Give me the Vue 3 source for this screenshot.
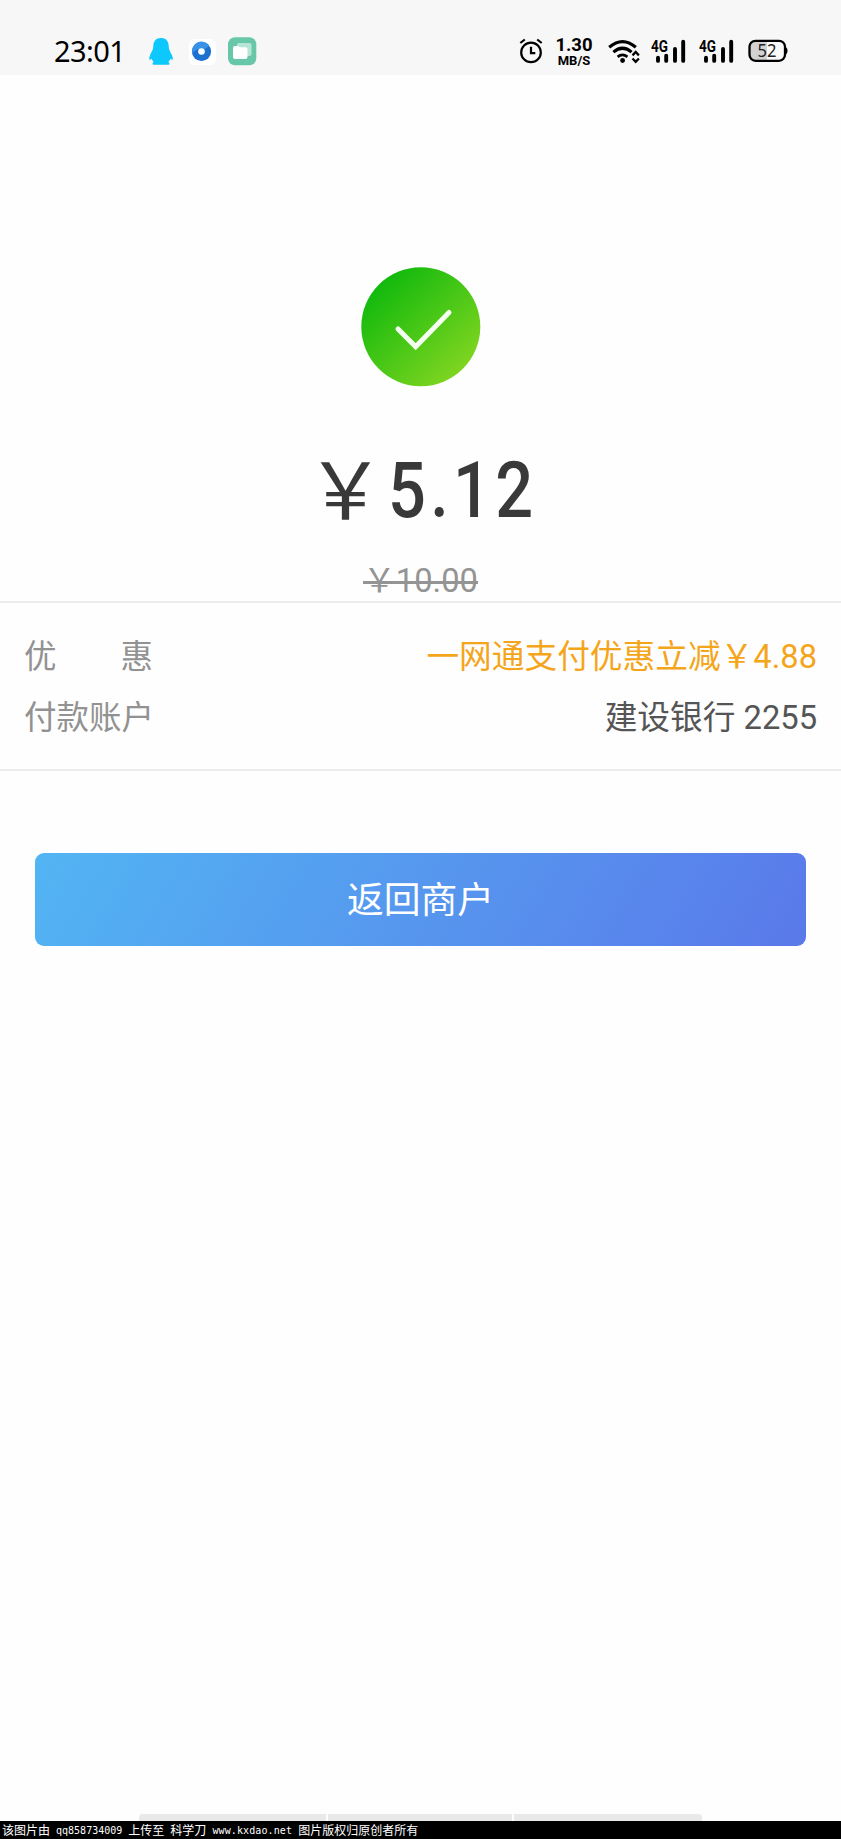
<script setup>
const amount = '5.12'
const rows = [
  { label: ['优', '惠'], cjk: '一网通支付优惠立减￥', num: '4.88', tone: 'promo' },
  { label: ['付', '款', '账', '户'], cjk: '建设银行', num: ' 2255', tone: 'plain' }
]
const mark = [
  { t: '该图片由', c: 'han' }, { t: ' qq858734009 ', c: 'lat' },
  { t: '上传至', c: 'han' }, { t: ' ', c: 'lat' },
  { t: '科学刀', c: 'han' }, { t: ' www.kxdao.net ', c: 'lat site' },
  { t: '图片版权归原创者所有', c: 'han' }
]
</script>

<template>
  <div class="page">
    <header class="status">
      <span class="clock">23:01</span>
      <svg class="apps" width="110" height="30" viewBox="0 0 110 30">
        <path fill="#0cc8fc" d="M12 1C6.800 1 4.500 4.500 4.300 9l-.3 3L1.500 17Q-.2 20.500.3 22.500c.4.800 1.400.2 2.400-.8.3 1.500 1 2.300 2 3.200-1.600.7-1.700 2.800-.2 2.800h15c1.500 0 1.400-2.100-.2-2.800 1-.9 1.700-1.700 2-3.200 1 1 2 1.600 2.400.8.500-2-.7-4.500-1.700-6L20 12l-.3-3C19.500 4.500 17.200 1 12 1z" />
        <rect x="40" y="2" width="27" height="26" rx="6" fill="#fff" />
        <circle cx="52.500" cy="14.500" r="9.600" fill="#1b70d0" />
        <path d="M43.300 16a9.500 9.500 0 0 1 17-7.500q-5 5-8 3.500t-9 4z" fill="#3a91e8" />
        <circle cx="52.500" cy="14.500" r="3.300" fill="#fff" />
        <rect x="79" y=".3" width="28.300" height="28" rx="7" fill="#68c7a9" />
        <rect x="88" y="6" width="14.500" height="13" rx="2" fill="#b5e5d5" />
        <path d="M86 9h3.500l1.300 1.200h5.700q2 0 2 2V20q0 2-2 2H86q-2 0-2-2v-9q0-2 2-2z" fill="#fff" />
      </svg>
      <svg class="alarm" width="24" height="26" viewBox="0 0 24 26" fill="none" stroke="#000" stroke-width="2.200">
        <circle cx="12" cy="14.400" r="9.800" />
        <path d="M12 8.800v6.300h4.300M1.300 5 5.800 1.500M18.200 1.500 22.700 5" />
      </svg>
      <span class="speed"><b>1.30</b><i>MB/S</i></span>
      <svg class="wifi" width="33" height="26" viewBox="0 0 33 26" fill="none" stroke="#000">
        <g stroke-width="3.200">
          <path d="M1.200 8.200Q14.500-3 27.800 8.200" />
          <path d="M5.400 13.100Q14.500 5.400 23.600 13.100" />
          <path d="M9.600 17.800Q14.500 14 19.400 17.800" stroke-width="2.800" />
        </g>
        <circle cx="14.600" cy="21.500" r="2.400" fill="#000" stroke="none" />
        <path d="m24.500 16.400 3.200-3.400 3.200 3.400M24.500 19.500l3.200 3.400 3.200-3.400" stroke-width="2.300" />
      </svg>
      <svg v-for="n in 2" :key="n" :class="'cell cell' + n" width="36" height="26" viewBox="0 0 36 26">
        <text x="0" y="11.800" textLength="17" lengthAdjust="spacingAndGlyphs">4G</text>
        <path d="M7 17.700v3.200M15.200 15.600v5.300M24 9v11.900M32.200 1.700v19.200" stroke="#000" stroke-width="3.900" stroke-linecap="round" />
      </svg>
      <svg class="battery" width="41" height="24" viewBox="0 0 41 24">
        <rect x="1.500" y="1.800" width="35.500" height="20" rx="6" fill="#fafafa" />
        <path d="M7.500 1.800H19v20H7.500q-6 0-6-6v-8q0-6 6-6z" fill="#d2d2d2" />
        <rect x="1.500" y="1.800" width="35.500" height="20" rx="6" fill="none" stroke="#000" stroke-width="2.300" />
        <path d="M37 8q2.500.5 2.500 3.800T37 15.600z" fill="#000" />
        <text x="9.500" y="17.600" textLength="19" lengthAdjust="spacingAndGlyphs">52</text>
      </svg>
    </header>

    <main>
      <section class="result">
        <svg class="success" width="120" height="120" viewBox="0 0 120 120">
          <defs>
            <linearGradient id="green" x1=".15" y1=".13" x2=".85" y2=".87">
              <stop offset="0" stop-color="#11b90d" />
              <stop offset="1" stop-color="#7fd520" />
            </linearGradient>
          </defs>
          <circle cx="59.800" cy="59.800" r="59.500" fill="url(#green)" />
          <path d="m37 62 17.700 17.800L88 45.500" fill="none" stroke="#f4fff0" stroke-width="5" stroke-linecap="round" />
        </svg>
        <div class="amount"><span class="yen">￥</span><span class="digits">{{ amount }}</span></div>
        <div class="original"><span class="han">￥</span>10.00</div>
      </section>

      <section class="details">
        <div v-for="row in rows" :key="row.num" class="row">
          <span class="label han"><span v-for="c in row.label" :key="c">{{ c }}</span></span>
          <span :class="['value', row.tone]"><span class="han">{{ row.cjk }}</span>{{ row.num }}</span>
        </div>
      </section>

      <button class="back" type="button">返回商户</button>
    </main>

    <footer>
      <div class="tabs"><span></span><span></span><span></span></div>
      <div class="credit"><span v-for="(m, i) in mark" :key="i" :class="m.c">{{ m.t }}</span></div>
    </footer>
  </div>
</template>

<style>
html, body { margin: 0; background: #fefefe; }
</style>

<style scoped>
.page {
  width: 841px;
  height: 1839px;
  display: flex;
  flex-direction: column;
  overflow: hidden;
  background: #fefefe;
  font-family: Roboto, "Noto Sans CJK SC", sans-serif;
}
.han { font-family: "Noto Sans CJK SC", sans-serif; }
.status {
  box-sizing: border-box;
  height: 75px;
  padding: 31px 0 0 54px;
  display: flex;
  align-items: flex-start;
  background: #f7f7f7;
  color: #000;
}
.status svg { display: block; flex: none; overflow: visible; }
.clock {
  width: 95px;
  font: 400 29px/40px "Noto Sans", sans-serif;
  letter-spacing: -.6px;
  white-space: nowrap;
}
.apps { margin-top: 6px; }
.alarm { margin: 7px 0 0 260px; }
.speed {
  width: 38px;
  margin: 7px 0 0 12px;
  display: flex;
  flex-direction: column;
  align-items: center;
  white-space: nowrap;
}
.speed b { font: 700 18.500px/15px Roboto, sans-serif; }
.speed i { font: 700 13px/15px Roboto, sans-serif; }
.wifi { margin: 8px 0 0 15px; }
.cell { margin-top: 9px; }
.cell1 { margin-left: 10px; }
.cell2 { margin-left: 12px; }
.cell text { font: 700 16px Roboto, sans-serif; }
.battery { margin: 8px 0 0 13px; }
.battery text { font: 400 17.500px "Noto Sans", sans-serif; fill: #222; }

main { flex: 1; }
.result { height: 526px; display: flex; flex-direction: column; align-items: center; }
.success { display: block; flex: none; margin-top: 192px; }
.amount {
  display: flex;
  height: 94px;
  margin-top: 56px;
  width: 233px;
  color: #393939;
  white-space: nowrap;
}
.yen { width: 84px; flex: none; font: 400 79px/86px "Noto Sans CJK SC", sans-serif; text-indent: 2px; }
.digits {
  font: 500 78.500px/94px Roboto, sans-serif;
  letter-spacing: 5px;
  transform: scaleX(.85);
  transform-origin: left;
}
.original {
  position: relative;
  margin-top: 21px;
  font-size: 32.700px;
  line-height: 40px;
  height: 40px;
  color: #949494;
  white-space: nowrap;
}
.original::after {
  content: "";
  position: absolute;
  left: 0;
  right: 0;
  top: 23px;
  height: 3px;
  background: #949494;
}
.details {
  box-sizing: border-box;
  height: 170px;
  padding: 20px 24px 0;
  border-top: 2px solid #ebebeb;
  border-bottom: 2px solid #ebebeb;
}
.row {
  height: 61px;
  display: flex;
  justify-content: space-between;
  font-size: 32.500px;
  line-height: 61px;
  white-space: nowrap;
}
.label { width: 129px; display: flex; justify-content: space-between; color: #929292; }
.value { font-size: 32.700px; white-space: pre; }
.promo { color: #f5a51b; }
.plain { color: #555; }
.back {
  display: block;
  width: 771px;
  height: 93px;
  margin: 82px 0 0 35px;
  padding: 0 0 4px;
  border: 0;
  border-radius: 9px;
  background: linear-gradient(120deg, #52b5f3, #5a79ea);
  color: #fff;
  font: 400 36.800px/89px "Noto Sans CJK SC", sans-serif;
}
footer { height: 25px; }
.tabs { height: 7px; width: 563px; margin-left: 139px; display: grid; grid-template-columns: 187px 184px 188px; gap: 2px; }
.tabs span { background: #e9e9e9; }
.tabs span:first-child { border-top-left-radius: 4px; }
.tabs span:last-child { border-top-right-radius: 4px; }
.credit {
  display: flex;
  height: 18px;
  padding-left: 2px;
  background: #000;
  color: #fff;
  white-space: pre;
}
.credit .han { font-size: 12px; line-height: 17px; }
.credit .lat { font: 10px/19px "DejaVu Sans Mono", monospace; }
.credit .site { letter-spacing: .1px; }
</style>
